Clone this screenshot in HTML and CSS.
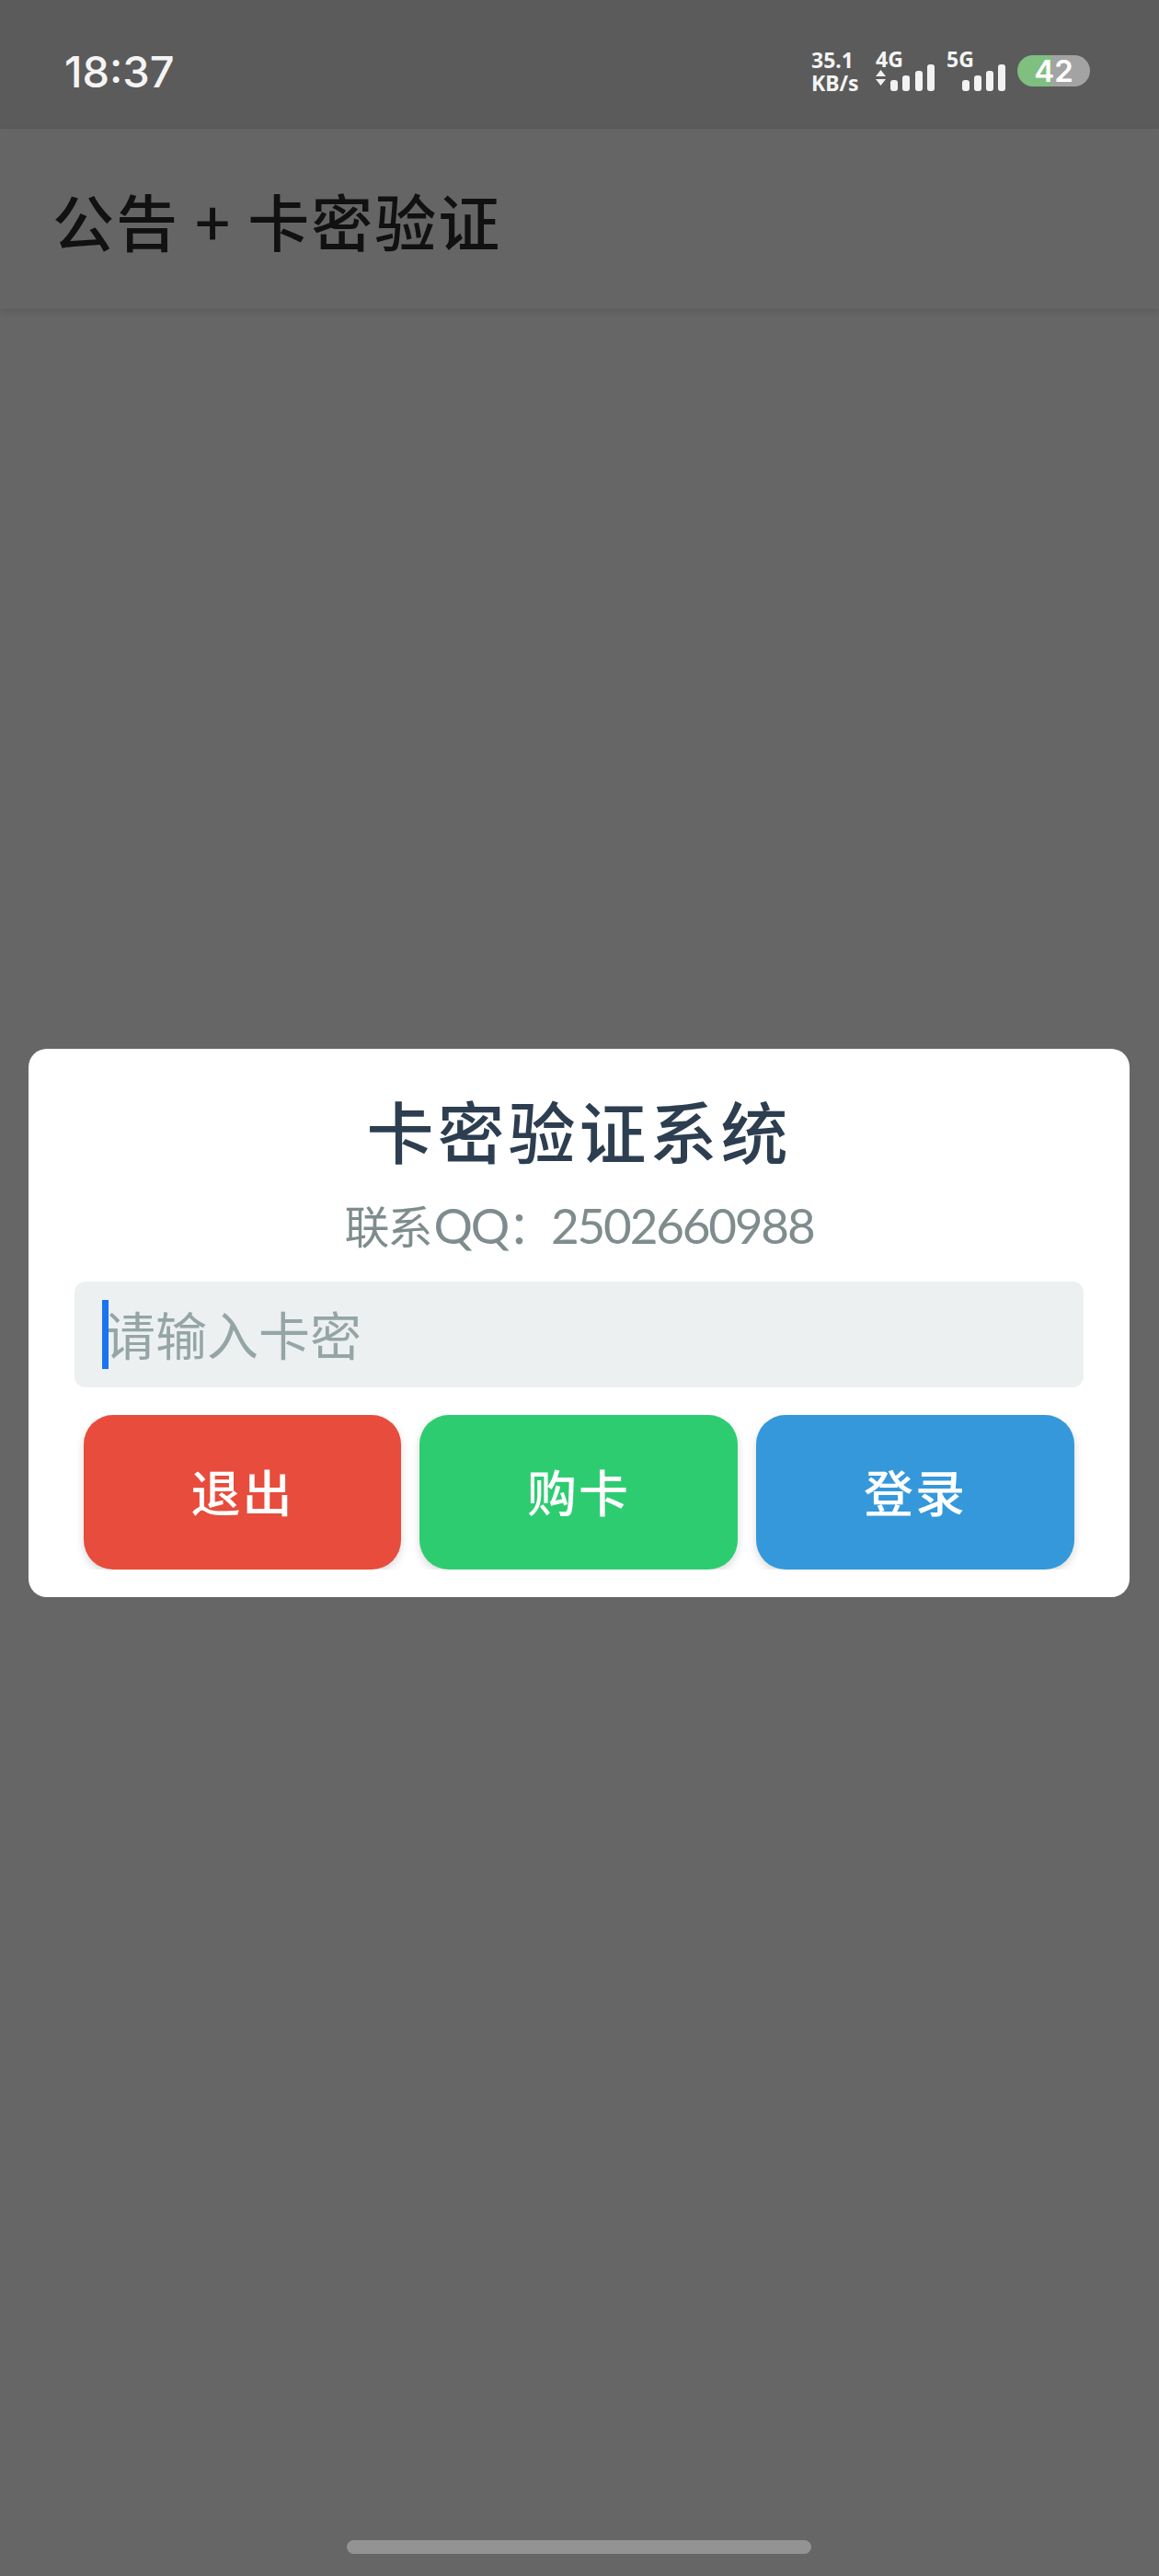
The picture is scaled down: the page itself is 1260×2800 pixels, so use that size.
FILE: index.html
```html
<!DOCTYPE html>
<html lang="zh-CN">
<head>
    <meta charset="UTF-8">
    <title>公告 + 卡密验证</title>
    <link rel="stylesheet" href="styles.css">
</head>
<body>

    <div class="statusbar">
        <span class="time">18:37</span>
        <div class="indicators">
            <div class="speed"><span>35.1</span><span>KB/s</span></div>
            <div class="signal">
                <span class="net">4G</span>
                <svg width="68" height="29" viewBox="0 0 68 29">
                    <path class="arrows" d="M11 13H0l5.500-7zM11 16H0l5.500 7z"/>
                    <rect x="16" y="17" width="8" height="12" rx="3"/>
                    <rect x="29" y="12" width="8" height="17" rx="3"/>
                    <rect x="43" y="7" width="8" height="22" rx="3"/>
                    <rect x="56" y="0" width="8" height="29" rx="3"/>
                </svg>
            </div>
            <div class="signal">
                <span class="net">5G</span>
                <svg width="68" height="29" viewBox="0 0 68 29">
                    <rect x="17" y="17" width="8" height="12" rx="3"/>
                    <rect x="30" y="12" width="8" height="17" rx="3"/>
                    <rect x="43" y="7" width="8" height="22" rx="3"/>
                    <rect x="56" y="0" width="8" height="29" rx="3"/>
                </svg>
            </div>
            <div class="battery">42</div>
        </div>
    </div>

    <div class="appbar">公告 + 卡密验证</div>

    <div class="card">
        <h1 class="card-title">卡密验证系统</h1>
        <p class="contact"><span class="contact-label">联系</span>QQ<span class="contact-colon">：</span>2502660988</p>
        <div class="inputwrap">
            <input class="cardkey" placeholder="请输入卡密">
            <span class="caret"></span>
        </div>
        <div class="buttons">
            <button class="btn btn-exit">退出</button>
            <button class="btn btn-buy">购卡</button>
            <button class="btn btn-login">登录</button>
        </div>
    </div>

    <div class="homebar"></div>

</body>
</html>
```

FILE: styles.css
```css
* {
    box-sizing: border-box;
}

html, body {
    margin: 0;
    padding: 0;
}

body {
    width: 1260px;
    height: 2800px;
    display: flex;
    flex-direction: column;
    background-color: #666666;
    font-family: "Noto Sans CJK SC", "Noto Sans", sans-serif;
}

/* status bar */
.statusbar {
    height: 140px;
    background-color: #5b5b5b;
    display: flex;
    align-items: flex-start;
    justify-content: space-between;
    padding: 52px 75px 0 70px;
    color: #f4f4f4;
}

.time {
    font-family: Inter, sans-serif;
    font-size: 47px;
    font-weight: 500;
    line-height: 52px;
}

.indicators {
    display: flex;
    align-items: flex-start;
    gap: 9px;
    font-family: "Noto Sans", sans-serif;
    font-weight: 700;
}

.speed {
    width: 61px;
    display: flex;
    flex-direction: column;
    padding-top: 1px;
    font-size: 23px;
    line-height: 25px;
}

.signal {
    width: 68px;
    display: flex;
    flex-direction: column;
}

.net {
    font-size: 23px;
    line-height: 24px;
    margin-bottom: -6px;
}

.signal svg {
    fill: #f2f2f2;
}

.arrows {
    fill: #f0f0f0;
}

.battery {
    width: 79px;
    height: 34px;
    margin-top: 8px;
    border-radius: 17px;
    background: linear-gradient(to right, #7fbf7f 47%, #a3a3a3 47%);
    color: #ffffff;
    font-family: Inter, sans-serif;
    font-size: 33px;
    font-weight: 600;
    line-height: 34px;
    text-align: center;
}

/* app bar */
.appbar {
    height: 196px;
    background-color: #656565;
    box-shadow: 0 3px 8px rgba(0, 0, 0, 0.1);
    padding-left: 57px;
    display: flex;
    align-items: center;
    color: #111111;
    font-size: 67px;
    font-weight: 500;
    letter-spacing: 2px;
}

/* verify card */
.card {
    margin: 804px 32px 0 31px;
    height: 596px;
    background-color: #ffffff;
    border-radius: 20px;
    padding: 0 50px;
    display: flex;
    flex-direction: column;
}

.card-title {
    margin: 43px 0 0 0;
    height: 88px;
    text-align: center;
    color: #2c3e50;
    font-size: 73px;
    font-weight: 500;
    line-height: 88px;
    letter-spacing: 4px;
}

.contact {
    margin: 24px 0 0 0;
    height: 70px;
    text-align: center;
    color: #7f8c8d;
    font-family: Lato, "Noto Sans CJK SC", sans-serif;
    font-size: 53px;
    line-height: 70px;
    letter-spacing: -2.200px;
}

.contact-label {
    font-family: "Noto Sans CJK SC", sans-serif;
    font-size: 49px;
    letter-spacing: -2px;
    margin-right: 3px;
}

.contact-colon {
    font-family: "Noto Sans CJK TC", sans-serif;
    font-size: 50px;
    letter-spacing: -3px;
}

.inputwrap {
    position: relative;
    margin-top: 28px;
    height: 115px;
}

.cardkey {
    width: 100%;
    height: 100%;
    border: none;
    outline: none;
    border-radius: 12px;
    background-color: #ecf0f1;
    padding: 0 0 4px 32px;
    font-family: inherit;
    font-size: 56px;
}

.cardkey::placeholder {
    color: #95a5a6;
    opacity: 1;
}

.caret {
    position: absolute;
    left: 30px;
    top: 20px;
    width: 7px;
    height: 75px;
    background-color: #1a73f0;
}

.buttons {
    display: flex;
    gap: 20px;
    margin-top: 30px;
    padding: 0 10px;
    height: 168px;
    overflow: hidden;
}

.btn {
    flex: 1;
    height: 168px;
    border: none;
    border-radius: 32px;
    padding: 0 0 3px 0;
    color: #ffffff;
    font-family: inherit;
    font-size: 54px;
    font-weight: 500;
    letter-spacing: 2px;
    box-shadow: 0 4px 10px rgba(0, 0, 0, 0.15);
}

.btn-exit {
    flex: 0 0 345px;
    background-color: #e74c3c;
}

.btn-buy {
    background-color: #2ecc71;
}

.btn-login {
    background-color: #3498db;
}

/* gesture bar */
.homebar {
    width: 505px;
    height: 15px;
    margin: 1025px 0 0 377px;
    border-radius: 8px;
    background-color: #939393;
}
```
